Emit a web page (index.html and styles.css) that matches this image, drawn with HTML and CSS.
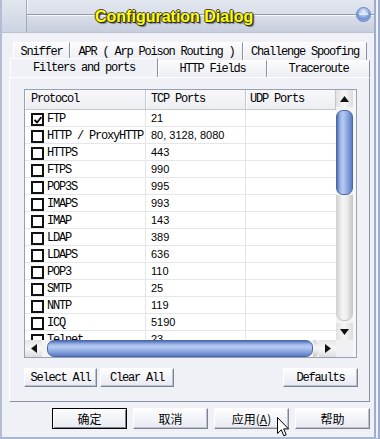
FILE: index.html
```html
<!DOCTYPE html>
<html>
<head>
<meta charset="utf-8">
<link rel="stylesheet" href="styles.css">
</head>
<body>
<div class="window">
  <div class="titlebar">
    <div class="tb-left"></div>
    <div class="tb-right">
      <div class="tb-top"></div>
      <div class="tb-bottom"></div>
    </div>
    <div class="title">Configuration Dialog</div>
    <div class="close"></div>
  </div>

  <div class="main">
    <div class="tabrow tabrow1">
      <div class="tab t-sniffer">Sniffer</div>
      <div class="tab t-apr">APR ( Arp Poison Routing )</div>
      <div class="tab t-chal">Challenge Spoofing</div>
    </div>
    <div class="tabrow tabrow2">
      <div class="tab t-filters active">Filters and ports</div>
      <div class="tab t-http">HTTP Fields</div>
      <div class="tab t-trace">Traceroute</div>
    </div>

    <div class="panel">
      <div class="list">
        <div class="list-main">
          <div class="lhead">
            <div class="hc">Protocol</div>
            <div class="hc">TCP Ports</div>
            <div class="hc">UDP Ports</div>
          </div>
          <div class="rows">
            <div class="row"><div class="c1"><span class="cb checked"><svg viewBox="0 0 8 8" width="8" height="8"><path d="M0.5 4 L3 6.5 L7.5 1" fill="none" stroke="#000" stroke-width="1.8"/></svg></span>FTP</div><div class="c2">21</div><div class="c3"></div></div>
            <div class="row"><div class="c1"><span class="cb"></span>HTTP / ProxyHTTP</div><div class="c2">80, 3128, 8080</div><div class="c3"></div></div>
            <div class="row"><div class="c1"><span class="cb"></span>HTTPS</div><div class="c2">443</div><div class="c3"></div></div>
            <div class="row"><div class="c1"><span class="cb"></span>FTPS</div><div class="c2">990</div><div class="c3"></div></div>
            <div class="row"><div class="c1"><span class="cb"></span>POP3S</div><div class="c2">995</div><div class="c3"></div></div>
            <div class="row"><div class="c1"><span class="cb"></span>IMAPS</div><div class="c2">993</div><div class="c3"></div></div>
            <div class="row"><div class="c1"><span class="cb"></span>IMAP</div><div class="c2">143</div><div class="c3"></div></div>
            <div class="row"><div class="c1"><span class="cb"></span>LDAP</div><div class="c2">389</div><div class="c3"></div></div>
            <div class="row"><div class="c1"><span class="cb"></span>LDAPS</div><div class="c2">636</div><div class="c3"></div></div>
            <div class="row"><div class="c1"><span class="cb"></span>POP3</div><div class="c2">110</div><div class="c3"></div></div>
            <div class="row"><div class="c1"><span class="cb"></span>SMTP</div><div class="c2">25</div><div class="c3"></div></div>
            <div class="row"><div class="c1"><span class="cb"></span>NNTP</div><div class="c2">119</div><div class="c3"></div></div>
            <div class="row"><div class="c1"><span class="cb"></span>ICQ</div><div class="c2">5190</div><div class="c3"></div></div>
            <div class="row"><div class="c1"><span class="cb"></span>Telnet</div><div class="c2">23</div><div class="c3"></div></div>
          </div>
        </div>
        <div class="vscroll">
          <div class="sbtn"><svg width="9" height="6" viewBox="0 0 9 6"><path d="M4.5 0 L9 6 L0 6 Z" fill="#111"/></svg></div>
          <div class="vtrack">
            <div class="vthumb"></div>
            <div class="vrest"></div>
          </div>
          <div class="sbtn"><svg width="9" height="6" viewBox="0 0 9 6"><path d="M0 0 L9 0 L4.5 6 Z" fill="#111"/></svg></div>
        </div>
        <div class="spare"></div>
        <div class="hscroll">
          <div class="sbtn"><svg width="6" height="9" viewBox="0 0 6 9"><path d="M0 4.5 L6 0 L6 9 Z" fill="#111"/></svg></div>
          <div class="htrack">
            <div class="hthumb"></div>
            <div class="hrest"></div>
          </div>
          <div class="sbtn"><svg width="6" height="9" viewBox="0 0 6 9"><path d="M0 0 L6 4.5 L0 9 Z" fill="#111"/></svg></div>
        </div>
        <div class="corner"></div>
        <div class="spare2"></div>
      </div>

      <div class="panel-btns">
        <div class="btn sbtn-sm w-sel">Select All</div>
        <div class="btn sbtn-sm w-clr">Clear All</div>
        <div class="grow"></div>
        <div class="btn sbtn-sm w-def">Defaults</div>
      </div>
    </div>

    <div class="dlg-btns">
      <div class="btn dbtn default">确定</div>
      <div class="btn dbtn">取消</div>
      <div class="btn dbtn">应用(<u>A</u>)</div>
      <div class="btn dbtn">帮助</div>
    </div>
  </div>

  <svg class="cursor" width="13" height="21" viewBox="0 0 13 21"><path d="M0.5 0.5 L0.5 16.5 L4.3 12.8 L6.8 18.8 L9.2 17.8 L6.7 11.9 L11.5 11.9 Z" fill="#fff" stroke="#000" stroke-width="1" stroke-linejoin="miter"/></svg>
</div>
</body>
</html>
```
FILE: styles.css
```css
* { box-sizing: border-box; }
html, body { margin: 0; padding: 0; }
body {
  width: 380px;
  height: 439px;
  overflow: hidden;
  background: #eef0f6;
  font-family: "Liberation Mono", monospace;
  font-size: 12px;
  letter-spacing: -1.2px;
  color: #000;
}
.window {
  position: relative;
  width: 380px;
  height: 439px;
  border-left: 2px solid #b3bed6;
  border-right: 6px double #9cadd0;
  border-bottom: 2px solid #a9b6d2;
  background: #eff1f6;
  display: flex;
  flex-direction: column;
}

/* title bar */
.titlebar {
  position: relative;
  height: 33px;
  display: flex;
  background: linear-gradient(#e3e7ef, #ccd3e1);
  border-bottom: 1px solid #b9c1d1;
  flex: none;
}
.tb-left {
  width: 25px;
  border-right: 1px solid #a2aaba;
  box-shadow: 1px 0 0 #f6f7fa;
}
.tb-right { flex: 1; display: flex; flex-direction: column; }
.tb-top { height: 15px; border-bottom: 1px solid #9199ab; }
.tb-bottom {
  flex: 1;
  border-top: 1px solid #f4f6fa;
  background: linear-gradient(#d9dee8, #c6cddd);
}
.title {
  position: absolute;
  left: 93px;
  top: 8px;
  font-family: "Liberation Sans", Arial, sans-serif;
  font-weight: bold;
  font-size: 16px;
  letter-spacing: 0;
  color: #ffff00;
  text-shadow: 1px 1px 0 #2a2a2a, -1px 0 0 #4a4a4a, 0 -1px 0 #4a4a4a, 1px 0 0 #333, 0 1px 0 #333, 2px 2px 1px rgba(0,0,0,0.45);
}
.close {
  position: absolute;
  left: 354px;
  top: 7px;
  width: 15px;
  height: 15px;
  border-radius: 50%;
  border: 1px solid #6d87b8;
  background: radial-gradient(circle at 50% 30%, #e6eefc 0, #a9c0ea 35%, #5f86cf 70%, #4b70b8 100%);
  box-shadow: inset 0 -1px 0 rgba(255,255,255,0.4);
}
.close::after {
  content: "";
  position: absolute;
  left: 2px;
  right: 2px;
  top: 5px;
  height: 2px;
  background: #dfe8f8;
  border-radius: 1px;
}

/* main */
.main {
  padding: 9px 4px 0 7px;
  flex: 1;
  display: flex;
  flex-direction: column;
}
.tabrow { display: flex; }
.tabrow1 { height: 18px; margin-left: 4px; }
.tabrow2 { height: 17px; margin-left: 1px; position: relative; z-index: 2; }
.tab {
  background: linear-gradient(#fbfbfd, #eceef3);
  border-top: 1px solid #ffffff;
  border-left: 1px solid #ffffff;
  border-right: 1px solid #8a92a2;
  text-align: center;
  white-space: nowrap;
}
.tabrow1 .tab { line-height: 17px; padding-top: 1px; }
.tabrow2 .tab { line-height: 16px; padding-top: 0; }
.t-sniffer { width: 57px; }
.t-apr { width: 173px; }
.t-chal { width: 124px; }
.t-filters { width: 148px; }
.t-http { width: 109px; }
.t-trace { width: 103px; }
.tab.active {
  height: 19px;
  margin-top: -2px;
  background: #eff1f6;
  line-height: 18px;
  border-top: 1px solid #fff;
}

.panel {
  height: 325px;
  width: 361px;
  border: 1px solid;
  border-color: #ffffff #8a92a2 #8a92a2 #ffffff;
  background: #eff1f6;
  padding: 11px 12px 0 14px;
  display: flex;
  flex-direction: column;
  position: relative;
  z-index: 1;
}

/* list view */
.list {
  width: 333px;
  height: 269px;
  border: 1px solid #97a1b5;
  background: #fff;
  display: grid;
  grid-template-columns: 311px 17px 3px;
  grid-template-rows: 250px 17px;
  flex: none;
}
.list-main { overflow: hidden; display: flex; flex-direction: column; }
.lhead {
  height: 20px;
  flex: none;
  display: grid;
  grid-template-columns: 121px 100px 90px;
  background: linear-gradient(#f8f8fa, #eceef2);
  border-bottom: 1px solid #c2c8d2;
}
.hc {
  border-right: 1px solid #c2c8d2;
  box-shadow: inset 1px 0 0 #fff;
  padding-left: 6px;
  line-height: 18px;
}
.lhead .hc:nth-child(2) { padding-left: 5px; }
.lhead .hc:nth-child(3) { padding-left: 4px; }
.rows { flex: 1; overflow: hidden; }
.row {
  height: 17px;
  display: grid;
  grid-template-columns: 121px 100px 90px;
  border-bottom: 1px solid #e3e6eb;
}
.row > div { border-right: 1px solid #e3e6eb; }
.row > div:last-child { border-right: none; }
.c1 {
  display: flex;
  align-items: center;
  padding-left: 6px;
  white-space: nowrap;
  padding-top: 1px;
}
.c2 {
  font-family: "Liberation Sans", Arial, sans-serif;
  letter-spacing: 0;
  font-size: 11px;
  padding-left: 5px;
  line-height: 17px;
}
.cb {
  width: 13px;
  height: 13px;
  border: 2px solid #111;
  background: #fff;
  margin-right: 3px;
  display: flex;
  align-items: center;
  justify-content: center;
  flex: none;
  margin-top: 1px;
}

/* scrollbars */
.sbtn {
  width: 17px;
  height: 17px;
  flex: none;
  display: flex;
  align-items: center;
  justify-content: center;
  background: linear-gradient(90deg, #e2e2e2, #f7f7f7 50%, #dcdcdc);
}
.vscroll {
  display: flex;
  flex-direction: column;
  background: #f3f3f3;
}
.vtrack {
  flex: 1;
  display: flex;
  flex-direction: column;
  padding: 3px 0 2px;
}
.vthumb {
  height: 85px;
  flex: none;
  border-radius: 7px;
  border: 1px solid #4b67a6;
  background: linear-gradient(90deg, #4e6fb6 0, #9db6e8 22%, #b7cbf1 40%, #8aa6df 70%, #5a7cc6 100%);
}
.vrest {
  flex: 1;
  border-radius: 0 0 8px 8px;
  background: linear-gradient(90deg, #cfcfcf 0, #f6f6f6 40%, #ececec 65%, #c4c4c4 100%);
  border-bottom: 1px solid #c0c0c0;
}
.hscroll {
  display: flex;
  background: #f3f3f3;
}
.hscroll .sbtn { background: linear-gradient(#e4e4e4, #f7f7f7 50%, #dcdcdc); }
.htrack {
  flex: 1;
  display: flex;
  padding: 0 0 0 5px;
}
.hthumb {
  width: 266px;
  flex: none;
  border-radius: 7px;
  border: 1px solid #4b67a6;
  background: linear-gradient(#4e6fb6 0, #9db6e8 22%, #b7cbf1 40%, #8aa6df 70%, #5a7cc6 100%);
}
.hrest {
  flex: 1;
  border-radius: 0 8px 8px 0;
  background: linear-gradient(#cfcfcf 0, #f6f6f6 40%, #ececec 65%, #c4c4c4 100%);
}
.corner { background: #f1f1f3; }
.spare, .spare2 { background: #f7f7f9; }

/* buttons */
.btn {
  display: flex;
  align-items: center;
  justify-content: center;
  background: linear-gradient(#fdfdfe, #e7eaf1);
  border: 1px solid;
  border-color: #ffffff #7c8494 #7c8494 #ffffff;
  box-shadow: inset -1px -1px 0 #bcc3cf;
  white-space: nowrap;
}
.panel-btns {
  display: flex;
  margin-top: 10px;
}
.sbtn-sm { height: 19px; }
.w-sel { width: 73px; }
.w-clr { width: 74px; margin-left: 3px; }
.w-def { width: 75px; margin-right: -1px; }
.grow { flex: 1; }

.dlg-btns {
  display: flex;
  justify-content: flex-end;
  gap: 6px;
  margin-top: 6px;
  padding-right: 0;
  width: 361px;
}
.dbtn {
  width: 75px;
  height: 21px;
  font-family: "Noto Sans CJK SC", sans-serif;
  font-size: 12px;
  letter-spacing: 0;
}
.dbtn u { text-decoration: underline; }
.dbtn.default {
  border: 1px solid #000;
  box-shadow: inset 1px 1px 0 #fff, inset -1px -1px 0 #7c8494;
}

.cursor {
  position: absolute;
  left: 275px;
  top: 417px;
}
```
